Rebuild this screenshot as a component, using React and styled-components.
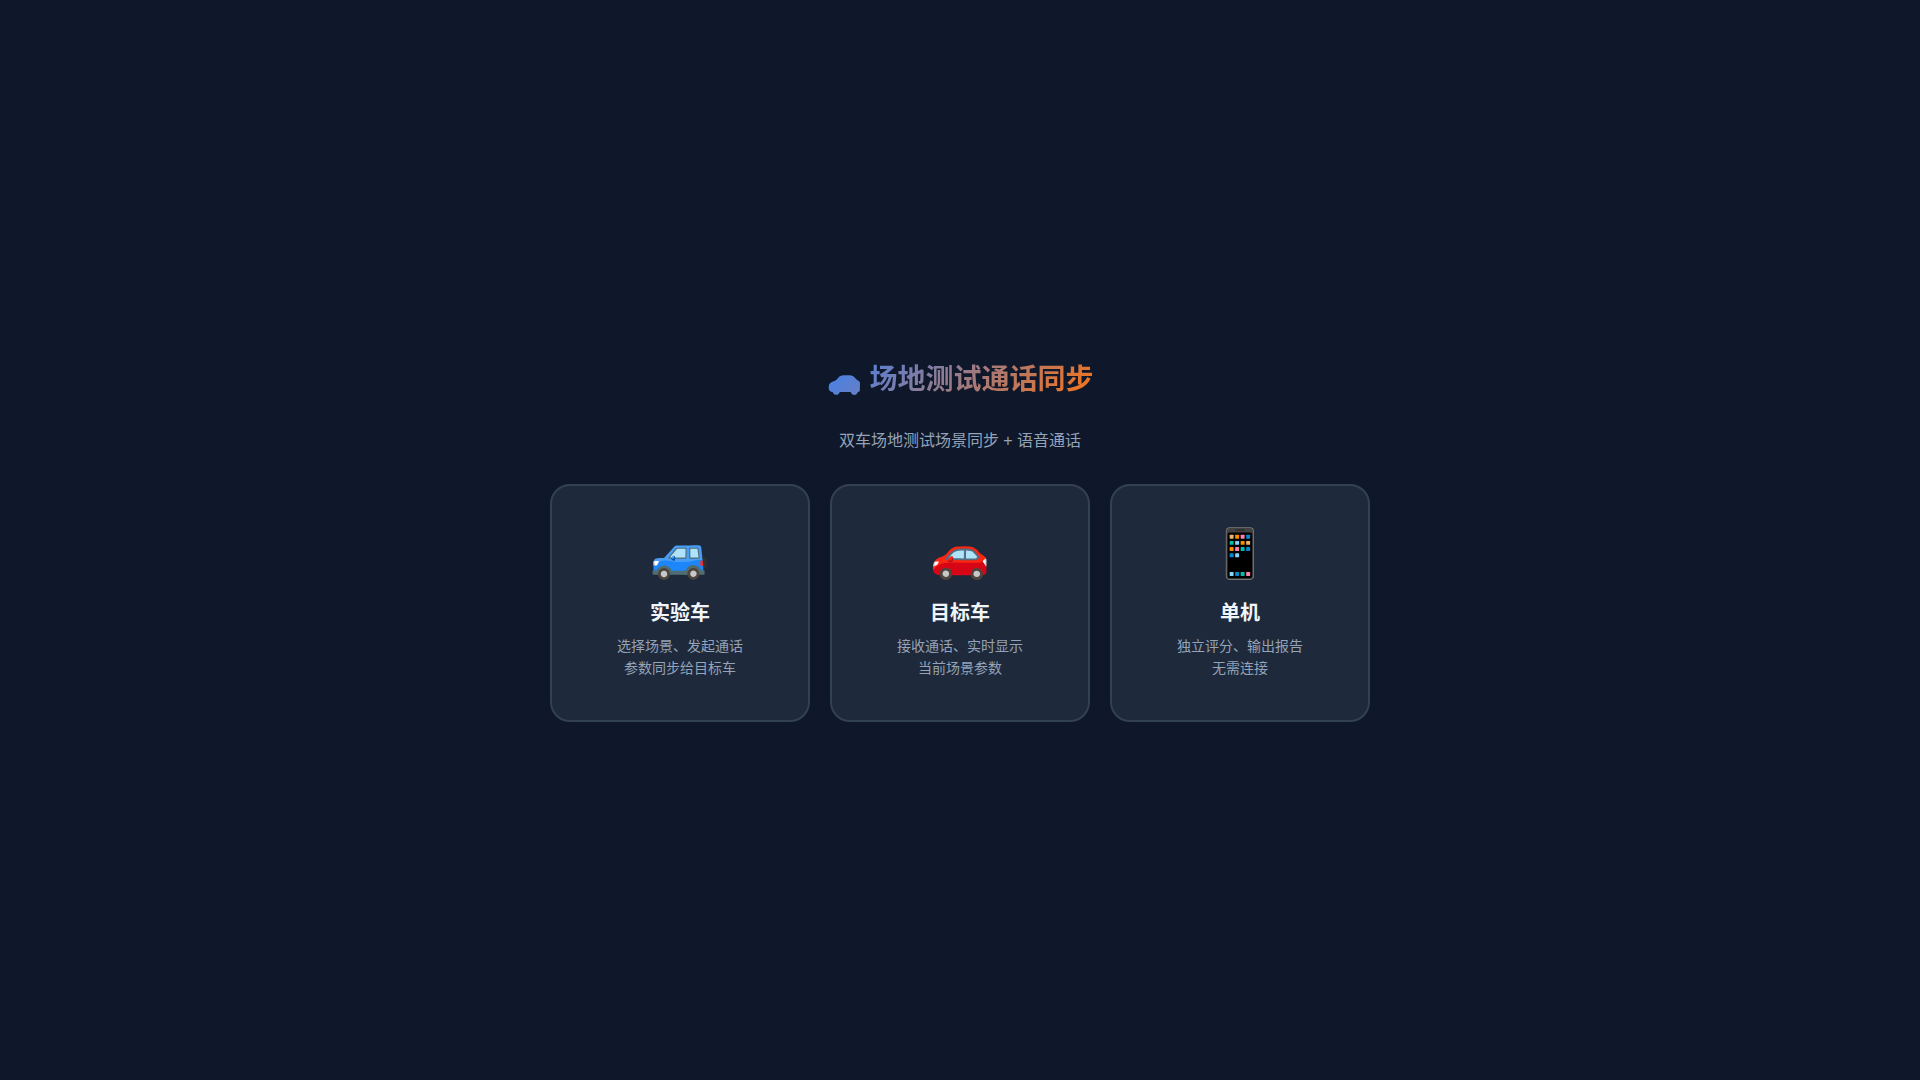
import React from 'react';
import styled, { createGlobalStyle } from 'styled-components';

const Global = createGlobalStyle`
  * { box-sizing: border-box; margin: 0; padding: 0; }
  body {
    background: #0f172a;
    color: #f1f5f9;
    font-family: "Liberation Sans", "Noto Sans CJK SC", sans-serif;
  }
`;
const Page = styled.main`
  min-height: 100vh;
  display: flex;
  flex-direction: column;
  align-items: center;
  justify-content: center;
  gap: 32px;
  padding: 20px;
`;
const Title = styled.h1`
  padding-top: 4px;
  font-size: 28px;
  line-height: 36px;
  font-weight: 700;
  background: linear-gradient(135deg, #3b82f6, #f97316);
  background-clip: text;
  -webkit-background-clip: text;
  -webkit-text-fill-color: transparent;
`;
const Subtitle = styled.p`
  font-size: 16px;
  line-height: 22px;
  color: #94a3b8;
`;
const Cards = styled.div`
  display: flex;
  flex-wrap: wrap;
  justify-content: center;
  gap: 20px;
`;
const Card = styled.button`
  width: 260px;
  padding: 40px 24px 41px;
  background: #1e293b;
  border: 2px solid #334155;
  border-radius: 20px;
  font-family: inherit;
  color: inherit;
  text-align: center;
  cursor: pointer;
`;
const Icon = styled.div`
  font-size: 48px;
  line-height: 56px;
  margin-bottom: 16px;
`;
const Name = styled.h2`
  font-size: 20px;
  line-height: 30px;
  font-weight: 700;
  margin-bottom: 7px;
`;
const Note = styled.p`
  font-size: 14px;
  line-height: 22px;
  color: #94a3b8;
`;

const roles = [
  { icon: '🚙', name: '实验车', lines: ['选择场景、发起通话', '参数同步给目标车'] },
  { icon: '🚗', name: '目标车', lines: ['接收通话、实时显示', '当前场景参数'] },
  { icon: '📱', name: '单机', lines: ['独立评分、输出报告', '无需连接'] },
];

export default function App() {
  return (
    <Page>
      <Global />
      <Title>🚗 场地测试通话同步</Title>
      <Subtitle>双车场地测试场景同步 + 语音通话</Subtitle>
      <Cards>
        {roles.map((r) => (
          <Card key={r.name} type="button">
            <Icon>{r.icon}</Icon>
            <Name>{r.name}</Name>
            <Note>{r.lines[0]}<br />{r.lines[1]}</Note>
          </Card>
        ))}
      </Cards>
    </Page>
  );
}
